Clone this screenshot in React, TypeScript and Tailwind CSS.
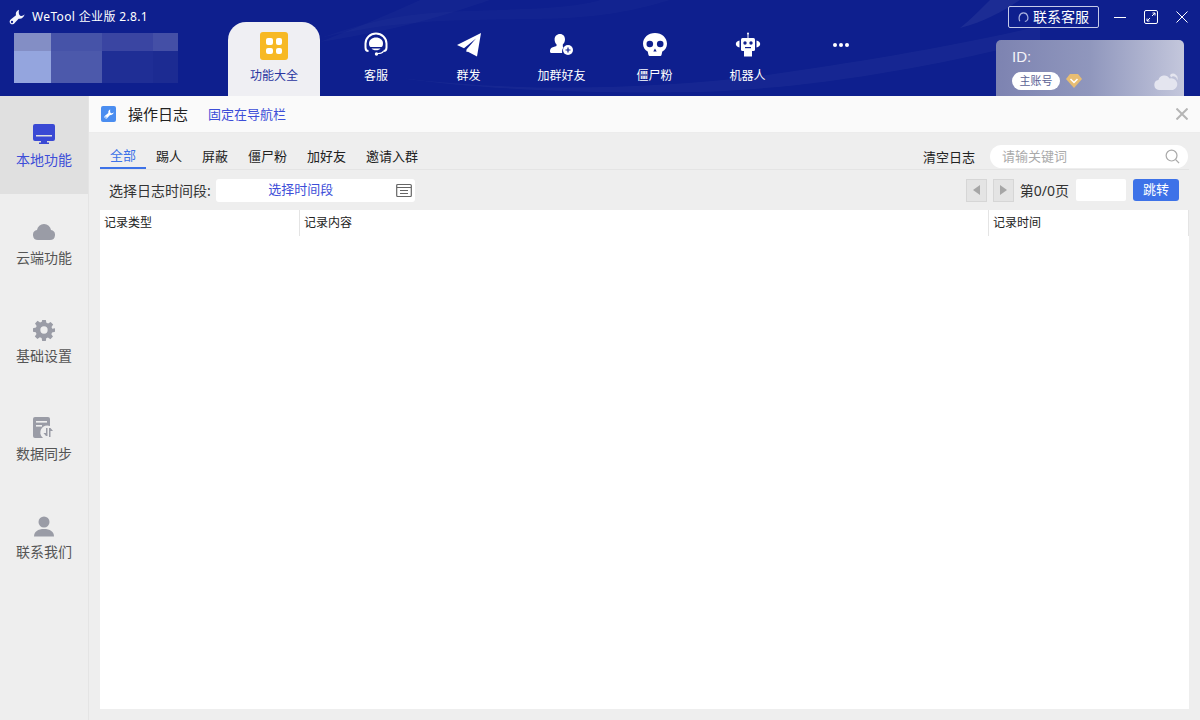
const font = { fontFamily: '"Noto Sans", "Noto Sans CJK SC", sans-serif' }

function WrenchIcon({ className, hole }: { className?: string; hole: string }) {
  return (
    <svg viewBox="0 0 24 24" className={className} fill="currentColor">
      <path d="M15 1C11 2.500 9.500 6 10.500 9.500L3 15.500C1 17 .5 19 1.500 21 2.500 23 5 23.500 7 22.500 8 22 8.500 21 9.500 20L14.500 14.500C18.500 15.500 22 13 23.500 8 21.500 10 19 11 17 10 15 9 14 6 15 1z" />
      <circle cx="4.500" cy="19.500" r="1.700" fill={hole} />
    </svg>
  )
}

function CrossIcon({ className, width = 1 }: { className?: string; width?: number }) {
  return (
    <svg viewBox="0 0 12 12" className={className} fill="none" stroke="currentColor" strokeWidth={width}>
      <path d="M.5.5l11 11M11.500.5l-11 11" />
    </svg>
  )
}

function GridIcon() {
  return (
    <div className="grid h-7 w-7 grid-cols-2 gap-[3px] rounded-[3px] bg-[#f7b924] p-[6px]">
      <span className="rounded-[2px] bg-white" />
      <span className="rounded-[2px] bg-white" />
      <span className="rounded-[2px] bg-white" />
      <span className="rounded-[2px] bg-white" />
    </div>
  )
}

function HeadsetIcon() {
  return (
    <svg viewBox="0 0 26 26" className="h-[26px] w-[26px]">
      <path d="M2.500 11.500a10.500 10 0 0 1 21 0v4c0 2.500-1.500 3.500-3 3.500M2.500 11.500v4c0 2.500 1.500 3.500 3 3.500" fill="none" stroke="#fff" strokeWidth="2" />
      <path d="M6 11.500C6 8 9 5.500 13 5.500s7 2.500 7 6c0 2-.5 3-1.500 3.500h-11C6.500 14.500 6 13.500 6 11.500z" fill="#fff" />
      <path d="M8.500 16.500h9c-.8 1.200-2.500 1.800-4.500 1.800s-3.700-.6-4.500-1.800z" fill="#fff" />
      <path d="M20.500 19.200c-1 1.600-3 2.300-5.500 2.300" fill="none" stroke="#fff" strokeWidth="1.200" />
      <circle cx="13.500" cy="22" r="1.700" fill="#fff" />
    </svg>
  )
}

function SendIcon() {
  return (
    <svg viewBox="0 0 26 26" className="h-[26px] w-[26px]" fill="#fff">
      <path d="M25 1 1 13l7 3.200L20 6.500 10.500 17.500V19l10.500 5.500z" />
      <path d="M10.500 18.500v1.500l2-.6z" />
    </svg>
  )
}

function AddUserIcon() {
  return (
    <svg viewBox="0 0 26 26" className="h-[26px] w-[26px]">
      <path d="M11 2c3.200 0 5 2.400 5 5.300 0 2.400-1 4.200-2.200 5.300v1.600c0 .6.300 1 .8 1.300-1.200 1.300-1.700 3-1.500 5.500H2.200c-.7 0-1.200-.5-1.200-1.200 0-2 .4-3.400 2-4.200l4.500-1.700v-1.600C6.300 11.500 5.600 9.700 5.600 7.300 5.600 4.400 7.800 2 11 2z" fill="#fff" />
      <circle cx="19" cy="18" r="5" fill="#fff" />
      <path d="M16.500 18h5M19 15.500v5" stroke="#0e1f8e" strokeWidth="1.200" />
    </svg>
  )
}

function SkullIcon() {
  return (
    <svg viewBox="0 0 26 26" className="h-[26px] w-[26px]">
      <path d="M13 1c6.800 0 12 4.600 12 10.800 0 3.800-2 6.400-4.700 7.700l-.8 3.500c-.2.800-.8 1-1.500 1H8c-.7 0-1.300-.2-1.500-1l-.8-3.500C3 18.200 1 15.600 1 11.800 1 5.600 6.200 1 13 1z" fill="#fff" />
      <circle cx="7.800" cy="12" r="3.300" fill="#0e1f8e" />
      <circle cx="18.200" cy="12" r="3.300" fill="#0e1f8e" />
      <path d="M13 16.500l1.700 3h-3.400z" fill="#0e1f8e" />
    </svg>
  )
}

function RobotIcon() {
  return (
    <svg viewBox="0 0 26 26" className="h-[26px] w-[26px]" fill="#fff">
      <circle cx="13" cy="1.500" r="1" />
      <rect x="12.500" y="2" width="1" height="4" />
      <rect x="6" y="6" width="14" height="13" rx="1.500" />
      <rect x="9" y="19" width="8" height="5.500" />
      <path d="M4.500 8.500v7C2.500 15 .8 14 .8 12s1.700-3 3.700-3.500zM21.500 8.500v7c2-.5 3.700-1.500 3.700-3.500s-1.700-3-3.700-3.500z" />
      <circle cx="10" cy="11" r="1.700" fill="#0e1f8e" />
      <circle cx="16" cy="11" r="1.700" fill="#0e1f8e" />
      <rect x="10" y="15" width="6" height="1.200" fill="#0e1f8e" />
    </svg>
  )
}

function DotsIcon() {
  return (
    <div className="flex h-[26px] items-center gap-[2px]">
      <span className="h-1 w-1 rounded-full bg-white" />
      <span className="h-1 w-1 rounded-full bg-white" />
      <span className="h-1 w-1 rounded-full bg-white" />
    </div>
  )
}

function SideIcon({ name, color }: { name: string; color: string }) {
  if (name === 'monitor') {
    return (
      <svg viewBox="0 0 22 20" className="h-5 w-[22px]" fill={color}>
        <path d="M2 0h18a2 2 0 0 1 2 2v13a2 2 0 0 1-2 2h-6v1.500h2V20H6v-1.500h2V17H2a2 2 0 0 1-2-2V2a2 2 0 0 1 2-2z" />
        <rect x="3" y="11" width="16" height="1.500" fill="#e0e0e0" />
      </svg>
    )
  }
  if (name === 'cloud') {
    return (
      <svg viewBox="0 0 22 16" className="h-4 w-[22px]" fill={color}>
        <path d="M5 16a5 5 0 0 1-1-9.900A7 7 0 0 1 11 0a7 7 0 0 1 7 6.100A5 5 0 0 1 17 16z" />
      </svg>
    )
  }
  if (name === 'gear') {
    return (
      <svg viewBox="0 0 24 24" className="h-[22px] w-[22px]" fill={color}>
        <path fillRule="evenodd" d="M10 1h4l.6 3.200 1.900.8 2.700-1.800 2.800 2.800-1.800 2.700.8 1.900L24 10v4l-3.200.6-.8 1.900 1.800 2.700-2.800 2.800-2.700-1.800-1.900.8L14 24h-4l-.6-3.200-1.900-.8-2.700 1.800-2.800-2.800 1.800-2.700-.8-1.900L0 14v-4l3.200-.6.800-1.900L2.200 4.800 5 2l2.700 1.800 1.900-.8zM12 8a4 4 0 1 0 0 8 4 4 0 0 0 0-8z" />
      </svg>
    )
  }
  if (name === 'data') {
    return (
      <svg viewBox="0 0 22 22" className="h-[22px] w-[22px]" fill={color}>
        <path d="M2 0h13a2 2 0 0 1 2 2v7a7 7 0 0 0-7 12H2a2 2 0 0 1-2-2V2a2 2 0 0 1 2-2z" />
        <rect x="3" y="4" width="11" height="1.600" fill="#eee" />
        <rect x="3" y="8" width="6" height="1.600" fill="#eee" />
        <path d="M13 11h1.500v8H13l-2.500-3H13zM16 11h1.500l2.500 3h-2.500v6H16z" />
      </svg>
    )
  }
  return (
    <svg viewBox="0 0 20 20" className="h-[21px] w-5" fill={color}>
      <circle cx="10" cy="5.500" r="5.500" />
      <path d="M0 20c0-5 4-7.500 10-7.500S20 15 20 20z" />
    </svg>
  )
}

const sideItems = [
  { name: 'monitor', label: '本地功能', active: true },
  { name: 'cloud', label: '云端功能' },
  { name: 'gear', label: '基础设置' },
  { name: 'data', label: '数据同步' },
  { name: 'user', label: '联系我们' },
]

const topItems = [
  { label: '群发', icon: <SendIcon /> },
  { label: '加群好友', icon: <AddUserIcon /> },
  { label: '僵尸粉', icon: <SkullIcon /> },
  { label: '机器人', icon: <RobotIcon /> },
  { label: '', icon: <DotsIcon /> },
]

const filters = ['踢人', '屏蔽', '僵尸粉', '加好友', '邀请入群']

export default function App() {
  return (
    <div className="flex h-[720px] w-[1200px] flex-col overflow-hidden bg-[#eeeeee] text-[12px]" style={font}>
      {/* Top bar */}
      <header className="relative h-[96px] shrink-0 overflow-hidden bg-[#0e1f8e] text-white">
        <svg viewBox="0 0 1200 96" className="absolute inset-0 h-full w-full" fill="none">
          <path d="M320 42C400 30 450 14 490 0H420C390 14 350 30 320 42z" fill="#fff" fillOpacity="0.025" />
          <path d="M320 38C420 14 500 22 570 18 620 15 650 6 670 0H600C560 12 480 8 420 14 380 18 350 28 320 38z" fill="#fff" fillOpacity="0.02" />
          <path d="M400 78C520 92 640 90 760 76 860 62 960 45 1040 26V40C940 65 820 88 700 92 600 94 480 90 400 78z" fill="#fff" fillOpacity="0.035" />
          <path d="M960 28C985 22 1005 10 1020 0H990C978 12 970 20 960 28z" fill="#fff" fillOpacity="0.06" />
        </svg>

        <div className="relative flex h-full">
          {/* Title and mosaic */}
          <div className="flex w-[228px] shrink-0 flex-col pl-[9px] pt-[8px]">
            <div className="flex h-[17px] items-center gap-[6px] text-[12px] tracking-[0.35px]">
              <WrenchIcon className="h-4 w-4 text-[#f2f3fb]" hole="#0e1f8e" />
              <span className="ml-px">WeTool 企业版 2.8.1</span>
            </div>
            <div className="ml-[5px] mt-[8px] grid h-[50px] w-[164px] grid-cols-[37px_51px_51px_25px] grid-rows-[18px_32px]">
              <span className="bg-[#838ec5]" />
              <span className="bg-[#4653a8]" />
              <span className="bg-[#3a45a2]" />
              <span className="bg-[#444fa6]" />
              <span className="bg-[#94a5de]" />
              <span className="bg-[#4c59ab]" />
              <span className="bg-[#1f2e95]" />
              <span className="bg-[#1c2b92]" />
            </div>
          </div>

          {/* Nav tabs */}
          <div className="flex items-end">
            <div className="flex h-[74px] w-[92px] flex-col items-center rounded-t-[18px] bg-[#efeff3] pt-[10px] text-[#2a35a0]">
              <GridIcon />
              <span className="mt-[7px] leading-[18px]">功能大全</span>
            </div>
            <div className="ml-[10px] flex h-[74px] w-[92px] flex-col items-center pt-[10px]">
              <HeadsetIcon />
              <span className="mt-[9px] leading-[18px]">客服</span>
            </div>
            {topItems.map((item) => (
              <div key={item.label + 'x'} className="flex h-[74px] w-[93px] flex-col items-center pt-[10px]">
                {item.icon}
                <span className="mt-[9px] leading-[18px]">{item.label}</span>
              </div>
            ))}
          </div>
        </div>

        {/* Window controls */}
        <div className="absolute right-[12px] top-[6px] flex items-center">
          <div className="flex h-[22px] w-[91px] items-center justify-center gap-[4px] rounded-[2px] border border-[#c5cae8] text-[14px] leading-none">
            <svg viewBox="0 0 12 12" className="h-[11px] w-[11px]" fill="none" stroke="#aab2df" strokeWidth="1.300">
              <path d="M2 10C.5 7 1 1 6 1s5.500 6 4 8c-.5.700-1.500 1.200-2.500 1.200" />
            </svg>
            <span>联系客服</span>
          </div>
          <div className="ml-[15px] h-px w-[12px] bg-white" />
          <div className="relative ml-[18px] h-[14px] w-[14px] rounded-[2px] border border-white">
            <svg viewBox="0 0 12 12" className="absolute inset-0 h-full w-full" fill="none" stroke="#fff" strokeWidth="1">
              <path d="M7 5l3-3M7.500 2H10v2.500M5 7l-3 3M2 7.500V10h2.500" />
            </svg>
          </div>
          <CrossIcon className="ml-[18px] h-[12px] w-[12px]" />
        </div>

        {/* Account card */}
        <div className="absolute left-[996px] top-[40px] h-[56px] w-[188px] overflow-hidden rounded-t-[5px] bg-gradient-to-r from-[#7d83b1] via-[#9097bd] to-[#c4c7dc]">
          <div className="pl-[16px] pt-[7px] font-['Liberation_Sans'] text-[15px] leading-[20px] text-[#f3f3f8]">ID:</div>
          <div className="mt-[5px] flex items-center pl-[16px]">
            <span className="flex h-[18px] w-[48px] items-center justify-center rounded-full bg-white text-[11px] text-[#5a5f94]">主账号</span>
            <svg viewBox="0 0 16 14" className="ml-[6px] h-[14px] w-[16px]">
              <path d="M4 0h8l4 5-8 9-8-9z" fill="#e8bd72" />
              <path d="M4.500 5 8 8.500 11.500 5" stroke="#fff" strokeWidth="1.500" fill="none" />
            </svg>
          </div>
          <svg viewBox="0 0 24 17" className="absolute bottom-[6px] right-[6px] h-[17px] w-[24px]" fill="#e4e5ef">
            <path d="M5 17a5 5 0 0 1-.6-9.900A6 6 0 0 1 15.500 5.500 4.500 4.500 0 0 1 19 17z" />
            <path d="M16 2a4.500 4.500 0 0 1 7 5.500A3.500 3.500 0 0 0 17 4.500z" />
          </svg>
        </div>
      </header>

      <div className="flex min-h-0 flex-1">
        {/* Sidebar */}
        <aside className="w-[89px] shrink-0 border-r border-[#e4e4e4]">
          {sideItems.map((item) => (
            <div
              key={item.label}
              className={`flex h-[98px] flex-col items-center pt-[27px] ${item.active ? 'bg-[#e0e0e0] text-[#3d4ed8]' : 'text-[#555]'}`}
            >
              <div className="flex h-[22px] items-center">
                <SideIcon name={item.name} color={item.active ? '#3a49d4' : '#9a9ca6'} />
              </div>
              <span className="mt-[6px] text-[14px] leading-[18px]">{item.label}</span>
            </div>
          ))}
        </aside>

        {/* Main */}
        <main className="flex min-w-0 flex-1 flex-col">
          <div className="flex h-[37px] shrink-0 items-center border-b border-[#ececec] bg-[#fafafa] pl-[12px] pr-[12px]">
            <div className="flex h-4 w-[15px] items-center justify-center rounded-[2px] bg-[#4a8df0]">
              <WrenchIcon className="h-[10px] w-[10px] text-white" hole="#4a8df0" />
            </div>
            <span className="ml-[12px] text-[15px] leading-[20px] text-[#222]">操作日志</span>
            <span className="ml-[20px] text-[13px] leading-[20px] text-[#3d4ed8]">固定在导航栏</span>
            <CrossIcon className="ml-auto h-[12px] w-[12px] text-[#b5b5b5]" width={2} />
          </div>

          <div className="flex min-h-0 flex-1 flex-col pl-[11px] pr-[11px]">
            {/* Filter tabs */}
            <div className="flex h-[37px] shrink-0 items-end border-b border-[#e4e4e4]">
              <div className="flex h-[24px] w-[46px] items-start justify-center border-b-2 border-[#3d72e8] text-[#3d72e8]">
                <span className="text-[13px] leading-[20px]">全部</span>
              </div>
              {filters.map((f) => (
                <div key={f} className="flex h-[23px] items-start px-[10px] first:pl-[10px]">
                  <span className="text-[13px] leading-[20px] text-[#222]">{f}</span>
                </div>
              ))}
              <span className="mb-[2px] ml-auto text-[13px] leading-[20px] text-[#222]">清空日志</span>
              <div className="mb-[1px] ml-[15px] mr-px flex h-[23px] w-[198px] items-center justify-between rounded-full bg-white pl-[12px] pr-[8px]">
                <span className="text-[13px] text-[#aaa]">请输关键词</span>
                <svg viewBox="0 0 16 16" className="h-[15px] w-[15px]" fill="none" stroke="#aaa" strokeWidth="1.300">
                  <circle cx="7" cy="7" r="5.800" />
                  <path d="M11.500 11.500 15 15" />
                </svg>
              </div>
            </div>

            {/* Date range and pager */}
            <div className="flex h-[40px] shrink-0 items-center pr-[10px]">
              <span className="ml-[9px] text-[14px] text-[#333]">选择日志时间段:</span>
              <div className="ml-[5px] flex h-[23px] w-[199px] items-center rounded-[3px] bg-white pr-[3px]">
                <span className="flex-1 pr-[10px] text-center text-[13px] text-[#3d4ed8]">选择时间段</span>
                <svg viewBox="0 0 16 14" className="h-[14px] w-[16px]" fill="none" stroke="#666" strokeWidth="1.200">
                  <rect x=".7" y="1.500" width="14.600" height="12" rx="1" />
                  <path d="M1 4.500h14M4 7.500h8M4 10.500h8" />
                </svg>
              </div>
              <button className="ml-auto flex h-[23px] w-[21px] items-center justify-center border border-[#d6d6d6] bg-[#e4e4e4]">
                <span className="h-0 w-0 border-y-[5px] border-r-[7px] border-y-transparent border-r-[#a6a6a6]" />
              </button>
              <button className="ml-[6px] flex h-[23px] w-[21px] items-center justify-center border border-[#d6d6d6] bg-[#e4e4e4]">
                <span className="h-0 w-0 border-y-[5px] border-l-[7px] border-y-transparent border-l-[#a6a6a6]" />
              </button>
              <span className="ml-[6px] text-[14px] text-[#333]">第0/0页</span>
              <div className="ml-[7px] h-[22px] w-[50px] rounded-[2px] bg-white" />
              <button className="ml-[7px] h-[22px] w-[46px] rounded-[3px] bg-[#3d72e8] text-[13px] text-white">跳转</button>
            </div>

            {/* Table */}
            <div className="mb-[11px] flex min-h-0 flex-1 flex-col bg-white">
              <div className="flex h-[26px] shrink-0 items-center text-[12px] text-[#222]">
                <div className="flex h-full w-[200px] items-center border-r border-[#e4e4e4] pl-[4px]">记录类型</div>
                <div className="flex h-full w-[689px] items-center border-r border-[#e4e4e4] pl-[4px]">记录内容</div>
                <div className="flex h-full flex-1 items-center border-r border-[#e4e4e4] pl-[4px]">记录时间</div>
              </div>
            </div>
          </div>
        </main>
      </div>
    </div>
  )
}
